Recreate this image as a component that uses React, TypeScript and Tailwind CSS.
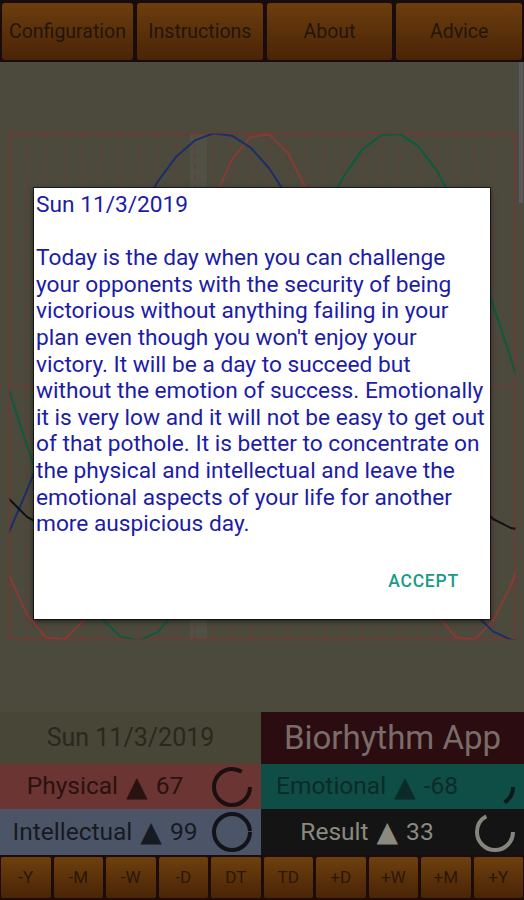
import React from "react";

const FONT = { fontFamily: "Roboto, 'Noto Sans', 'Liberation Sans', sans-serif" };
const TRI = { fontFamily: "'DejaVu Sans', sans-serif" };

const wave = (peak: number, period: number) => (x: number) =>
  387 - 254 * Math.cos((2 * Math.PI * (x - peak)) / period);

const red = wave(262, 410);
const blue = wave(218, 603);
const green = wave(392, 512);

const xs: number[] = [];
for (let x = 27 - 18.64 * 2; x <= 540; x += 18.64) xs.push(x);

const pts = (f: (x: number) => number) => xs.map((x) => `${x.toFixed(1)},${f(x).toFixed(1)}`).join(" ");
const avg = (x: number) => (red(x) + blue(x) + green(x)) / 3;

function Chart() {
  const dashes: number[] = [];
  for (let k = 0; k < 26; k++) dashes.push(27 + k * 18.64);
  return (
    <svg width="524" height="650" viewBox="0 62 524 650" className="block">
      <defs>
        <clipPath id="cl">
          <rect x="9.5" y="133.5" width="506" height="506" />
        </clipPath>
      </defs>
      <rect x="190" y="133.5" width="17" height="506" fill="#505045" />
      {dashes.map((x, i) => (
        <line key={i} x1={x} x2={x} y1="134" y2="639" stroke="#703a31" strokeWidth="1.2" strokeDasharray="5 5" />
      ))}
      <line x1="9.5" x2="515.5" y1="387" y2="387" stroke="#763832" strokeWidth="1.2" />
      <rect x="9.5" y="133.5" width="506" height="506" fill="none" stroke="#763832" strokeWidth="1.5" />
      <g clipPath="url(#cl)" fill="none" strokeWidth="2" strokeLinejoin="round">
        <polyline points={pts(red)} stroke="#883a35" />
        <polyline points={pts(blue)} stroke="#1c2d6a" />
        <polyline points={pts(green)} stroke="#0e5a3e" />
        <polyline points={pts(avg)} stroke="#111111" />
      </g>
    </svg>
  );
}

function Ring({ frac, color }: { frac: number; color: string }) {
  const r = 18;
  const c = 2 * Math.PI * r;
  return (
    <svg width="44" height="44" viewBox="0 0 44 44">
      <circle
        cx="22"
        cy="22"
        r={r}
        fill="none"
        stroke={color}
        strokeWidth="4"
        strokeDasharray={`${(frac * c).toFixed(2)} ${c.toFixed(2)}`}
      />
    </svg>
  );
}

function Label({ name, value, color }: { name: string; value: string; color: string }) {
  return (
    <div className="flex flex-1 items-center justify-center text-[24.5px]" style={{ color }}>
      <span>{name}</span>
      <span className="mx-[8px] text-[28px] leading-none" style={TRI}>
        ▲
      </span>
      <span>{value}</span>
    </div>
  );
}

const lines = [
  "Today is the day when you can challenge",
  "your opponents with the security of being",
  "victorious without anything failing in your",
  "plan even though you won't enjoy your",
  "victory. It will be a day to succeed but",
  "without the emotion of success. Emotionally",
  "it is very low and it will not be easy to get out",
  "of that pothole. It is better to concentrate on",
  "the physical and intellectual and leave the",
  "emotional aspects of your life for another",
  "more auspicious day.",
];

const topBtns = ["Configuration", "Instructions", "About", "Advice"];
const botBtns = ["-Y", "-M", "-W", "-D", "DT", "TD", "+D", "+W", "+M", "+Y"];

export default function App() {
  return (
    <div className="relative w-[524px] h-[900px] overflow-hidden bg-[#4b4a3d]" style={FONT}>
      {/* top bar */}
      <div className="flex h-[62px] gap-[4px] bg-[#1a0c0e] px-[2px] pt-[3px] pb-[2px]">
        {topBtns.map((t, i) => (
          <div
            key={t}
            className={`flex items-center justify-center rounded-[3px] bg-gradient-to-b from-[#6c3e0e] to-[#4a2407] text-[19.5px] text-[#24150a] ${
              i === 0 ? "w-[131px]" : "flex-1"
            }`}
          >
            {t}
          </div>
        ))}
      </div>

      {/* chart area */}
      <div className="h-[650px]">
        <Chart />
      </div>

      {/* bottom info */}
      <div className="grid grid-cols-[261px_263px]">
        <div className="flex h-[52px] items-center justify-center bg-[#484637] text-[25px] text-[#2a281e]">
          Sun 11/3/2019
        </div>
        <div className="flex h-[52px] items-center justify-center bg-[#2b0c10] text-[33px] text-[#7a6c69]">
          Biorhythm App
        </div>

        <div className="flex h-[45px] items-center bg-[#6a3532]">
          <Label name="Physical" value="67" color="#2a1210" />
          <div className="mr-[7px]">
            <Ring frac={0.835} color="#1a1010" />
          </div>
        </div>
        <div className="flex h-[45px] items-center bg-[#0f4e47]">
          <Label name="Emotional" value="-68" color="#0b2b27" />
          <div className="mr-[7px]">
            <Ring frac={0.16} color="#0a1a18" />
          </div>
        </div>

        <div className="flex h-[46px] items-center bg-[#4c5567]">
          <Label name="Intellectual" value="99" color="#161a22" />
          <div className="mr-[7px]">
            <Ring frac={0.985} color="#111318" />
          </div>
        </div>
        <div className="flex h-[46px] items-center bg-[#141414]">
          <Label name="Result" value="33" color="#8a8a80" />
          <div className="mr-[7px]">
            <Ring frac={0.665} color="#85857d" />
          </div>
        </div>
      </div>

      {/* bottom buttons */}
      <div className="flex h-[45px] gap-[3px] bg-[#1c0d0c] px-[1px] pt-[2px] pb-[2px]">
        {botBtns.map((t) => (
          <div
            key={t}
            className="flex flex-1 items-center justify-center rounded-[2px] bg-gradient-to-b from-[#6e400e] to-[#4a2407] text-[17px] text-[#2a1708]"
          >
            {t}
          </div>
        ))}
      </div>

      {/* scroll indicator */}
      <div className="absolute right-[1px] top-[62px] h-[141px] w-[4px] bg-[#5a5a5e]" />

      {/* dialog */}
      <div className="absolute left-[34px] top-[188px] w-[456px] h-[431px] bg-white shadow-[0_0_0_1px_rgba(0,0,0,0.6),0_2px_6px_rgba(0,0,0,0.6)]">
        <div className="pl-[2px] pt-[4px] text-[22.7px] leading-[26.6px] text-[#1c1ca6]">
          <div>Sun 11/3/2019</div>
          <div>&nbsp;</div>
          {lines.map((l, i) => (
            <div key={i} className="whitespace-nowrap">
              {l}
            </div>
          ))}
        </div>
        <div className="mt-[33px] flex justify-end pr-[31px]">
          <span className="text-[17.5px] font-medium tracking-[0.8px] leading-[20px] text-[#1a9a88]">ACCEPT</span>
        </div>
      </div>
    </div>
  );
}
